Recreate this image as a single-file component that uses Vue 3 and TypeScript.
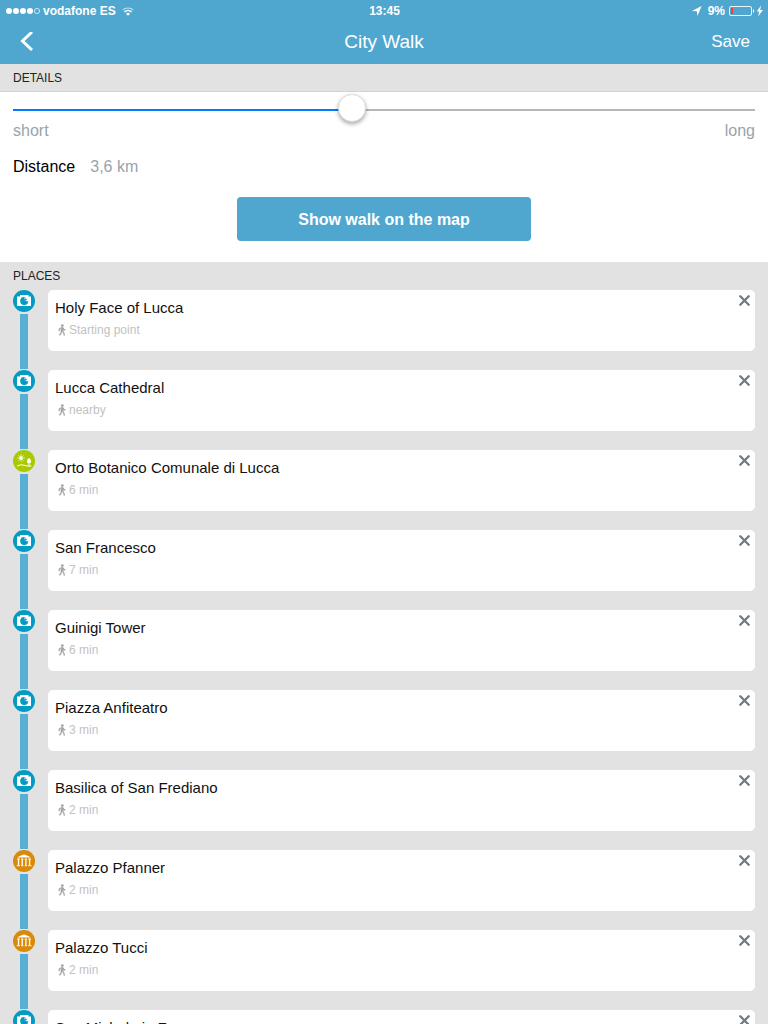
<script setup lang="ts">
import { computed, ref } from 'vue'

type Kind = 'photo' | 'nature' | 'museum'
interface Place {
  name: string
  time: string
  kind: Kind
}

const length = ref(45.5)
const fill = computed(() => ({ '--fill': `${length.value}%` }))

const places = ref<Place[]>([
  { name: 'Holy Face of Lucca', time: 'Starting point', kind: 'photo' },
  { name: 'Lucca Cathedral', time: 'nearby', kind: 'photo' },
  { name: 'Orto Botanico Comunale di Lucca', time: '6 min', kind: 'nature' },
  { name: 'San Francesco', time: '7 min', kind: 'photo' },
  { name: 'Guinigi Tower', time: '6 min', kind: 'photo' },
  { name: 'Piazza Anfiteatro', time: '3 min', kind: 'photo' },
  { name: 'Basilica of San Frediano', time: '2 min', kind: 'photo' },
  { name: 'Palazzo Pfanner', time: '2 min', kind: 'museum' },
  { name: 'Palazzo Tucci', time: '2 min', kind: 'museum' },
  { name: 'San Michele in Foro', time: '2 min', kind: 'photo' },
])

function remove(place: Place) {
  places.value = places.value.filter((p) => p !== place)
}
</script>

<template>
  <div class="screen">
    <header class="top">
      <div class="status">
        <div class="side">
          <svg class="signal" width="35" height="8" viewBox="0 0 35 8" aria-hidden="true">
            <g fill="#fff">
              <circle cx="3" cy="4" r="3" />
              <circle cx="10" cy="4" r="3" />
              <circle cx="17" cy="4" r="3" />
              <circle cx="24" cy="4" r="3" />
            </g>
            <circle cx="31" cy="4" r="2.6" fill="none" stroke="#fff" stroke-width=".7" />
          </svg>
          <span>vodafone ES</span>
          <svg class="wifi" width="12" height="9" viewBox="0 0 12 9" fill="none" stroke="#fff" aria-hidden="true">
            <path d="M.6 3.1a7.8 7.8 0 0 1 10.8 0" stroke-width="1.1" opacity=".65" />
            <path d="M2.4 5a5.1 5.1 0 0 1 7.2 0" stroke-width="1.4" />
            <path d="M6 8.8 4 6.8a2.8 2.8 0 0 1 4 0z" fill="#fff" stroke="none" />
          </svg>
        </div>
        <span>13:45</span>
        <div class="side end">
          <svg width="10" height="10" viewBox="0 0 10 10" fill="#fff" aria-hidden="true">
            <path d="M9.600 0 5.500 10 4.800 5.300 0 5z" />
          </svg>
          <span class="percent">9%</span>
          <svg width="34" height="12" viewBox="0 0 34 12" aria-hidden="true">
            <rect x=".5" y="1.5" width="22" height="9" rx="1.5" fill="none" stroke="#fff" stroke-width="1" opacity=".9" />
            <rect x="2" y="3" width="2" height="6" fill="#ff3b30" />
            <path d="M24 4v4q1.200-.4 1.200-2t-1.200-2z" fill="#fff" />
            <path d="M32 .5 27.800 6.600h2.600L29 11.500l5-6.500h-2.800z" fill="#fff" />
          </svg>
        </div>
      </div>
      <nav class="bar">
        <button class="back" type="button" aria-label="Back">
          <svg width="14" height="20" viewBox="0 0 14 20" fill="none" stroke="#fff" stroke-width="3" aria-hidden="true">
            <path d="M12 0 2.500 9 12 18" />
          </svg>
        </button>
        <h1>City Walk</h1>
        <button class="save" type="button">Save</button>
      </nav>
    </header>

    <main>
      <h2 class="details-title">Details</h2>
      <section class="details">
        <input
          v-model.number="length"
          class="slider"
          type="range"
          min="0"
          max="100"
          step="0.5"
          aria-label="Walk length"
          :style="fill"
        />
        <div class="ends"><span>short</span><span>long</span></div>
        <p class="distance"><b>Distance</b><span>3,6 km</span></p>
        <button class="show" type="button">Show walk on the map</button>
      </section>

      <section class="places">
        <h2>Places</h2>
        <ol>
          <li v-for="place in places" :key="place.name">
            <div class="rail">
              <svg v-if="place.kind === 'photo'" width="22" height="22" viewBox="0 0 22 22" aria-hidden="true">
                <circle cx="11" cy="11" r="11" fill="#049bc2" />
                <path fill="#fff" d="M4 6.500h3V5h8.500v1.500H18V16H4z" />
                <circle cx="11.200" cy="11" r="4" fill="#049bc2" />
                <path d="M11.500 7.600a3 3 0 0 0 3.600 3.600l.4-2.200-1.800-2z" fill="#fff" />
                <circle cx="12.800" cy="9.600" r="1" fill="#049bc2" />
              </svg>
              <svg v-else-if="place.kind === 'nature'" width="22" height="22" viewBox="0 0 22 22" aria-hidden="true">
                <circle cx="11" cy="11" r="11" fill="#a9c900" />
                <circle cx="8" cy="8" r="1.700" fill="#fff" />
                <path d="M8 4v8M4 8h8M5.200 5.200l5.600 5.600M10.800 5.200l-5.600 5.600" stroke="#fff" stroke-width=".6" />
                <path d="M4 16q4-2.200 8-.6t6.500.4" fill="none" stroke="#fff" stroke-width="1" />
                <path d="M16 8.300q2 .2 1.700 2.200 1.300 2.300-1.200 2.700V16h-1v-2.800q-2.500-.4-1.200-2.700-.3-2 1.700-2.200z" fill="#fff" />
              </svg>
              <svg v-else width="22" height="22" viewBox="0 0 22 22" aria-hidden="true">
                <circle cx="11" cy="11" r="11" fill="#d98a08" />
                <path fill="#fff" d="M11 4.500q4 .8 7 3H4q3-2.200 7-3z" />
                <path
                  d="M5.500 9v6.500M9.200 9v6.500M12.900 9v6.500M16.600 9v6.500"
                  stroke="#fff"
                  stroke-width="1.300"
                />
                <path
                  d="M4 9h3M8 9h2.400M11.700 9h2.400M15.100 9h3M3.700 15.700h3.400M8 15.700h2.400M11.700 15.700h2.400M15.100 15.700h3.400"
                  stroke="#fff"
                  stroke-width=".9"
                />
              </svg>
            </div>
            <article class="card">
              <h3>{{ place.name }}</h3>
              <p>
                <svg width="8" height="12" viewBox="0 0 8 12" aria-hidden="true">
                  <circle cx="4.300" cy="1.600" r="1.400" fill="#a6a6a6" />
                  <path d="M3 3.200h2.300L5.500 7.500H2.700z" fill="#a6a6a6" />
                  <path
                    d="M3.200 3.800 1.300 5v2M5 3.800l.8 1.600 1.600.8M3.500 7 3 9.500 1.300 11.300M4.500 7l1.300 2 .6 2.600"
                    fill="none"
                    stroke="#a6a6a6"
                    stroke-width="1.300"
                  />
                </svg>
                {{ place.time }}
              </p>
              <button type="button" :aria-label="`Remove ${place.name}`" @click="remove(place)">
                <svg width="11" height="11" viewBox="0 0 11 11" stroke="#6d7a82" stroke-width="2.300" stroke-linecap="round" aria-hidden="true">
                  <path d="m1.300 1.300 8.400 8.400M9.700 1.300 1.300 9.700" />
                </svg>
              </button>
            </article>
          </li>
        </ol>
      </section>
    </main>
  </div>
</template>

<style>
body {
  margin: 0;
  background: #e2e2e2;
}
</style>

<style scoped>
.screen {
  display: flex;
  flex-direction: column;
  height: 100vh;
  font-family: "Liberation Sans", Arial, sans-serif;
  color: #000;
}
h1, h2, h3, p, ol {
  margin: 0;
  padding: 0;
  font-weight: 400;
}
button {
  padding: 0;
  border: 0;
  background: none;
  color: inherit;
  font: inherit;
  cursor: pointer;
}
svg {
  display: block;
}
.top {
  flex: none;
  background: #4fa7d0;
  color: #fff;
}
.status {
  display: grid;
  grid-template-columns: 1fr auto 1fr;
  align-items: center;
  height: 20px;
  padding: 1px 5px 0 6px;
  box-sizing: border-box;
  font-size: 12px;
  font-weight: 700;
  line-height: 20px;
}
.side {
  display: flex;
  align-items: center;
}
.signal {
  margin-right: 2px;
}
.wifi {
  margin-left: 6px;
}
.end {
  justify-content: flex-end;
}
.percent {
  margin: 0 4px 0 6px;
}
.bar {
  display: grid;
  grid-template-columns: 1fr auto 1fr;
  align-items: center;
  height: 44px;
  padding: 0 18px;
}
.back {
  justify-self: start;
  padding: 0 2px;
}
.bar h1 {
  font-size: 19px;
  line-height: 44px;
}
.save {
  justify-self: end;
  font-size: 17px;
}
main {
  flex: 1;
  min-height: 0;
  overflow-y: auto;
  scrollbar-width: none;
}
h2 {
  height: 28px;
  padding: 0 13px;
  box-sizing: border-box;
  background: #e2e2e2;
  color: #222;
  font-size: 12px;
  line-height: 29px;
  text-transform: uppercase;
}
.details-title {
  border-bottom: 1px solid #d2d2d2;
}
.details {
  display: flex;
  flex-direction: column;
  padding: 2px 13px 21px;
  background: #fff;
}
.slider {
  appearance: none;
  width: 100%;
  height: 28px;
  margin: 0 0 1px;
  background: linear-gradient(90deg, #007aff var(--fill), #b7b7b7 var(--fill)) 0 15px / 100% 2px no-repeat;
}
.slider::-webkit-slider-thumb {
  appearance: none;
  width: 28px;
  height: 28px;
  border: 1px solid #ddd;
  border-radius: 50%;
  background: #fff;
  box-shadow: 0 2px 4px rgb(0 0 0 / 35%);
}
.ends {
  display: flex;
  justify-content: space-between;
  color: #98a4a9;
  font-size: 16px;
  line-height: 16px;
}
.distance {
  display: flex;
  gap: 15px;
  margin-top: 20px;
  font-size: 16px;
  line-height: 16px;
}
.distance b {
  font-weight: 400;
}
.distance span {
  color: #98a4a9;
}
.show {
  align-self: center;
  width: 294px;
  max-width: 100%;
  height: 44px;
  margin-top: 22px;
  padding-top: 2px;
  border-radius: 4px;
  background: #4fa7d0;
  color: #fff;
  font-size: 16px;
  font-weight: 700;
}
.places {
  background: #e2e2e2;
}
ol {
  list-style: none;
}
li {
  display: flex;
  gap: 13px;
  height: 80px;
  padding: 0 13px;
}
.rail {
  display: flex;
  flex: none;
  flex-direction: column;
  align-items: center;
  gap: 2px;
  width: 22px;
}
.rail svg {
  flex: none;
}
.rail::after {
  content: "";
  flex: 1;
  width: 8px;
  margin-bottom: 1px;
  background: #57afd6;
}
.card {
  position: relative;
  flex: 1;
  min-width: 0;
  height: 61px;
  padding: 8px 7px;
  box-sizing: border-box;
  border-radius: 5px;
  background: #fff;
}
.card h3 {
  padding-right: 24px;
  color: #111;
  font-size: 15px;
  line-height: 20px;
}
.card p {
  display: flex;
  align-items: center;
  gap: 3px;
  margin-top: 5px;
  padding-left: 3px;
  color: #c2c2c2;
  font-size: 12px;
  line-height: 14px;
}
.card button {
  position: absolute;
  top: 0;
  right: 0;
  padding: 5px;
}
</style>
